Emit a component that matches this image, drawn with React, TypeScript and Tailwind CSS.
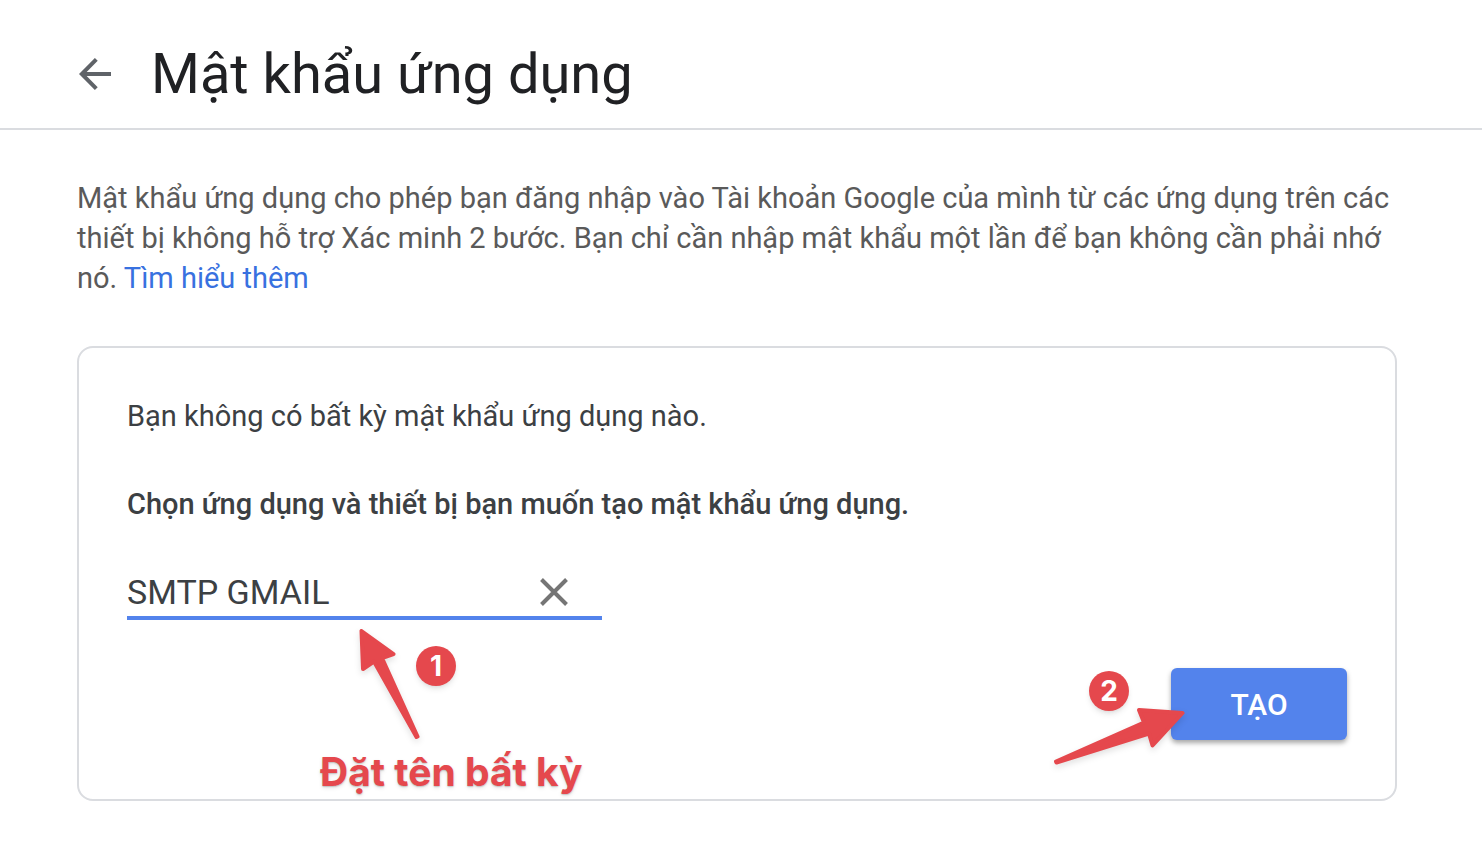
import React, { useState } from 'react';

interface BadgeProps {
  value: number;
  className: string;
}

function StepBadge({ value, className }: BadgeProps) {
  return (
    <span
      className={`absolute flex size-10 items-center justify-center rounded-full bg-[#e5484d] font-['Inter',sans-serif] text-[28px] leading-10 font-bold text-white shadow-md shadow-black/10 ${className}`}
    >
      {value}
    </span>
  );
}

export default function App() {
  const [name, setName] = useState('SMTP GMAIL');

  return (
    <div className="min-h-screen bg-white font-['Roboto',sans-serif] text-[#3c4043]">
      <header className="flex h-[130px] items-center gap-10 border-b-2 border-[#dadce0] pr-20 pl-[79px]">
        <button type="button" aria-label="Quay lại" className="mt-5">
          <svg className="size-8" viewBox="0 0 32 32" fill="none" stroke="#5f6368" strokeWidth="4">
            <path d="M32 16H4M17.3 1.4 2.8 16l14.5 14.6" />
          </svg>
        </button>
        <h1 className="mt-5 text-[56px] leading-[72px] font-normal text-[#202124]">Mật khẩu ứng dụng</h1>
      </header>

      <main className="pt-12 pr-[85px] pb-12 pl-[77px]">
        <p className="text-[29px] leading-10 text-[#5a5a5a]">
          Mật khẩu ứng dụng cho phép bạn đăng nhập vào Tài khoản Google của mình từ các ứng dụng trên các thiết bị
          không hỗ trợ Xác minh 2 bước. Bạn chỉ cần nhập mật khẩu một lần để bạn không cần phải nhớ nó.{' '}
          <a href="#" className="text-[#3871e0]">
            Tìm hiểu thêm
          </a>
        </p>

        <section className="mt-12 rounded-2xl border-2 border-[#dadce0] px-12 pt-12 pb-[59px]">
          <p className="text-[29px] leading-10">Bạn không có bất kỳ mật khẩu ứng dụng nào.</p>
          <label htmlFor="app-name" className="mt-12 block text-[29px] leading-10 font-medium">
            Chọn ứng dụng và thiết bị bạn muốn tạo mật khẩu ứng dụng.
          </label>

          <div className="relative mt-11 flex h-[52px] w-[475px] items-center border-b-4 border-[#5383ec] pr-8">
            <input
              id="app-name"
              type="text"
              value={name}
              onChange={(e) => setName(e.target.value)}
              className="min-w-0 flex-1 text-[34px] leading-10 outline-none"
            />
            <button type="button" aria-label="Xóa" onClick={() => setName('')}>
              <svg className="size-8" viewBox="0 0 32 32" fill="none" stroke="#757575" strokeWidth="4">
                <path d="M3.500 3.500l25 25M28.500 3.500l-25 25" />
              </svg>
            </button>

            {/* step 1 */}
            <svg
              className="pointer-events-none absolute top-14 left-[228px] h-[120px] w-[72px] drop-shadow-md"
              viewBox="0 0 72 120"
              fill="#e5484d"
              stroke="#e5484d"
              strokeWidth="4"
              strokeLinejoin="round"
            >
              <path d="M6.500 7 8 45l11-7.500L61.500 113l1-.5L27 34l11.500-4z" />
            </svg>
            <StepBadge value={1} className="top-[78px] left-[289px]" />
            <span className="absolute top-[180px] left-[193px] font-['Inter',sans-serif] text-[39px] leading-[48px] font-bold whitespace-nowrap text-[#e5484d] text-shadow-md">
              Đặt tên bất kỳ
            </span>
          </div>

          <div className="mt-12 flex justify-end">
            <div className="relative">
              <button
                type="button"
                className="h-[72px] w-44 rounded-md bg-[#5383ec] text-[30px] font-medium text-white shadow-[0_3px_5px_rgba(0,0,0,0.35)]"
              >
                TẠO
              </button>

              {/* step 2 */}
              <StepBadge value={2} className="top-[3px] -left-[82px]" />
              <svg
                className="pointer-events-none absolute top-9 -left-[121px] h-16 w-[140px] drop-shadow-md"
                viewBox="0 0 140 64"
                fill="#e5484d"
                stroke="#e5484d"
                strokeWidth="4"
                strokeLinejoin="round"
              >
                <path d="M132.500 9 89 6l5 12.500L6 57.500l.5 1L99 29.500l3.500 12z" />
              </svg>
            </div>
          </div>
        </section>
      </main>
    </div>
  );
}
